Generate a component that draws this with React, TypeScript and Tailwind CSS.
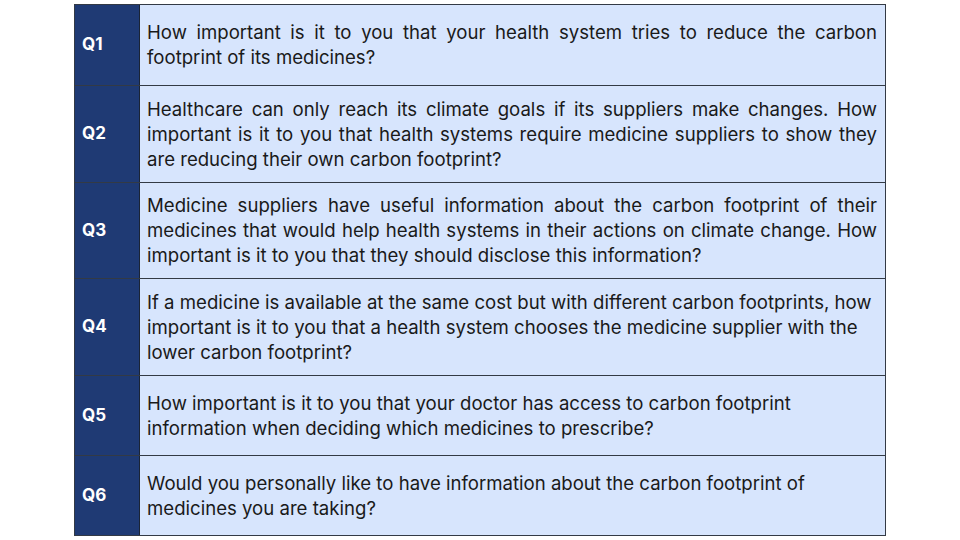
const rows = [
  {
    q: "Q1",
    h: "h-[80px]",
    justify: true,
    text: "How important is it to you that your health system tries to reduce the carbon footprint of its medicines?",
  },
  {
    q: "Q2",
    h: "h-[96px]",
    justify: true,
    text: "Healthcare can only reach its climate goals if its suppliers make changes. How important is it to you that health systems require medicine suppliers to show they are reducing their own carbon footprint?",
  },
  {
    q: "Q3",
    h: "h-[95px]",
    justify: true,
    text: "Medicine suppliers have useful information about the carbon footprint of their medicines that would help health systems in their actions on climate change. How important is it to you that they should disclose this information?",
  },
  {
    q: "Q4",
    h: "h-[96px]",
    justify: false,
    text: "If a medicine is available at the same cost but with different carbon footprints, how important is it to you that a health system chooses the medicine supplier with the lower carbon footprint?",
  },
  {
    q: "Q5",
    h: "h-[79px]",
    justify: false,
    text: "How important is it to you that your doctor has access to carbon footprint information when deciding which medicines to prescribe?",
  },
  {
    q: "Q6",
    h: "h-[79px]",
    justify: false,
    text: "Would you personally like to have information about the carbon footprint of medicines you are taking?",
  },
];

export default function App() {
  return (
    <div className="w-[960px] h-[540px] bg-white pt-[4px] pl-[74px] font-['Inter',sans-serif]">
      <div className="w-[812px] border border-[#333a45] flex flex-col">
        {rows.map((r, i) => (
          <div
            key={r.q}
            className={`flex ${r.h} box-content ${i > 0 ? "border-t border-[#333a45]" : ""}`}
          >
            <div className="w-[65px] shrink-0 bg-[#1f3a74] border-r border-[#1a2436] flex items-center pl-[7px] text-white font-bold text-[17px]">
              {r.q}
            </div>
            <div className="flex-1 bg-[#d7e5fd] flex items-center pl-[7px] pr-[8px]">
              <p
                className={`text-[18.6px] leading-[25px] text-[#1a1a1a] ${
                  r.justify ? "text-justify" : "text-left"
                }`}
              >
                {r.text}
              </p>
            </div>
          </div>
        ))}
      </div>
    </div>
  );
}
